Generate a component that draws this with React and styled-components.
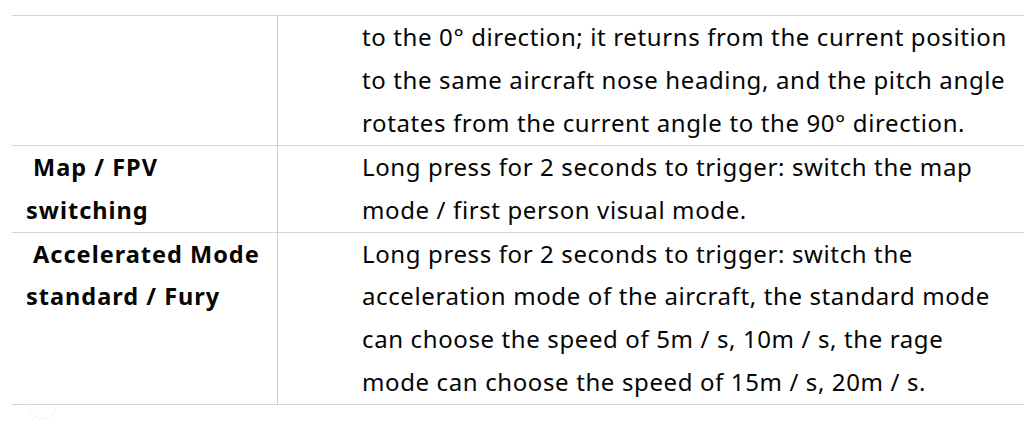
import React from 'react';
import styled, { createGlobalStyle } from 'styled-components';

const Global = createGlobalStyle`
  html, body {
    margin: 0;
    padding: 0;
    background: #fff;
  }
  body {
    font-family: 'Noto Sans', 'Open Sans', sans-serif;
    color: #050505;
  }
`;

const Page = styled.div`
  width: 1024px;
  height: 424px;
  overflow: hidden;
  padding-top: 15px;
  box-sizing: border-box;
  position: relative;
`;

const Table = styled.div`
  margin-left: 12px;
  display: grid;
  grid-template-columns: 266px 1fr;
  border-top: 1px solid #d6d6d6;
`;

const Label = styled.div`
  border-bottom: 1px solid #d6d6d6;
  border-right: 1px solid #cfcfcf;
  padding-left: 14px;
  font-weight: 700;
  font-size: 23.5px;
  letter-spacing: 1px;
  line-height: 42.9px;
  white-space: pre;
`;

const Desc = styled.div`
  border-bottom: 1px solid #d6d6d6;
  padding-left: 84px;
  font-size: 24px;
  letter-spacing: 0.62px;
  line-height: 42.9px;
  white-space: nowrap;
`;

const Mark = styled.svg`
  position: absolute;
  left: 28px;
  top: 404px;
`;

const rows = [
  {
    label: [],
    desc: [
      'to the 0° direction; it returns from the current position',
      'to the same aircraft nose heading, and the pitch angle',
      'rotates from the current angle to the 90° direction.',
    ],
  },
  {
    label: [' Map / FPV', 'switching'],
    desc: [
      'Long press for 2 seconds to trigger: switch the map',
      'mode / first person visual mode.',
    ],
  },
  {
    label: [' Accelerated Mode', 'standard / Fury'],
    desc: [
      'Long press for 2 seconds to trigger: switch the',
      'acceleration mode of the aircraft, the standard mode',
      'can choose the speed of 5m / s, 10m / s, the rage',
      'mode can choose the speed of 15m / s, 20m / s.',
    ],
  },
];

const Lines = ({ lines }) =>
  lines.map((l, i) => (
    <React.Fragment key={i}>
      {i > 0 && <br />}
      {l}
    </React.Fragment>
  ));

export default function App() {
  return (
    <Page>
      <Global />
      <Table>
        {rows.map((r, i) => (
          <React.Fragment key={i}>
            <Label>
              <Lines lines={r.label} />
            </Label>
            <Desc>
              <Lines lines={r.desc} />
            </Desc>
          </React.Fragment>
        ))}
      </Table>
      <Mark width="32" height="20" viewBox="0 0 32 20">
        <path d="M2 2 A13 13 0 0 0 28 2" fill="none" stroke="#d0d0d0" strokeWidth="1" strokeDasharray="1 3" />
      </Mark>
    </Page>
  );
}
